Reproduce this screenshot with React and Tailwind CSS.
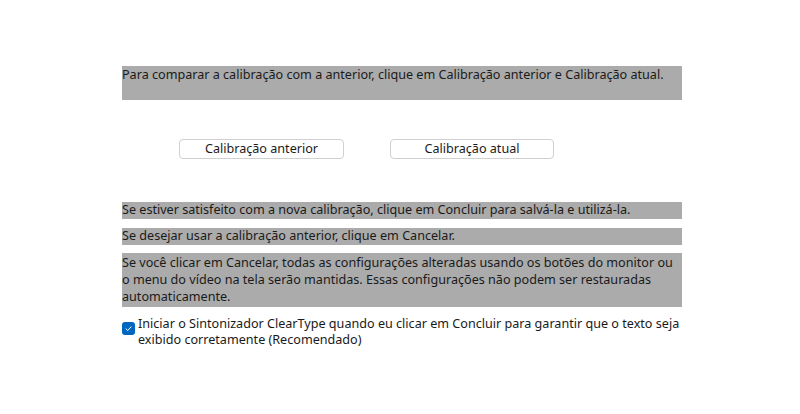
export default function App() {
  return (
    <div className="w-[800px] h-[414px] bg-white text-[#1a1a1a] text-[12.6px] leading-[16px] font-['Noto_Sans',sans-serif]">
      <div className="ml-[122px] w-[560px] pt-[66px]">
        {/* Intro */}
        <div className="h-[34px] pt-[1px] bg-[#ababab]">
          Para comparar a calibração com a anterior, clique em Calibração anterior e Calibração atual.
        </div>

        {/* Compare buttons */}
        <div className="flex mt-[39px] ml-[57px] gap-[46px]">
          <button className="w-[165px] h-[20px] rounded-[4px] border border-[#d0d0d0] bg-white leading-[16px]">
            Calibração anterior
          </button>
          <button className="w-[164px] h-[20px] rounded-[4px] border border-[#d0d0d0] bg-white leading-[16px]">
            Calibração atual
          </button>
        </div>

        {/* Messages */}
        <div className="mt-[43px] h-[17px] bg-[#ababab]">
          Se estiver satisfeito com a nova calibração, clique em Concluir para salvá-la e utilizá-la.
        </div>
        <div className="mt-[9px] h-[17px] bg-[#ababab]">
          Se desejar usar a calibração anterior, clique em Cancelar.
        </div>
        <div className="mt-[8px] h-[54px] pt-[1px] leading-[17px] bg-[#ababab]">
          Se você clicar em Cancelar, todas as configurações alteradas usando os botões do monitor ou o menu do vídeo na tela serão mantidas. Essas configurações não podem ser restauradas automaticamente.
        </div>

        {/* ClearType option */}
        <label className="flex items-start gap-[3px] mt-[9px]">
          <span className="mt-[6px] w-[13px] h-[13px] shrink-0 rounded-[3px] bg-[#0067c0] flex items-center justify-center">
            <svg width="9" height="9" viewBox="0 0 9 9" fill="none">
              <path d="M2 4.8 L3.8 6.5 L7 2.8" stroke="white" strokeWidth="1" strokeLinecap="round" strokeLinejoin="round" />
            </svg>
          </span>
          <span>
            Iniciar o Sintonizador ClearType quando eu clicar em Concluir para garantir que o texto seja exibido corretamente (Recomendado)
          </span>
        </label>
      </div>
    </div>
  )
}
